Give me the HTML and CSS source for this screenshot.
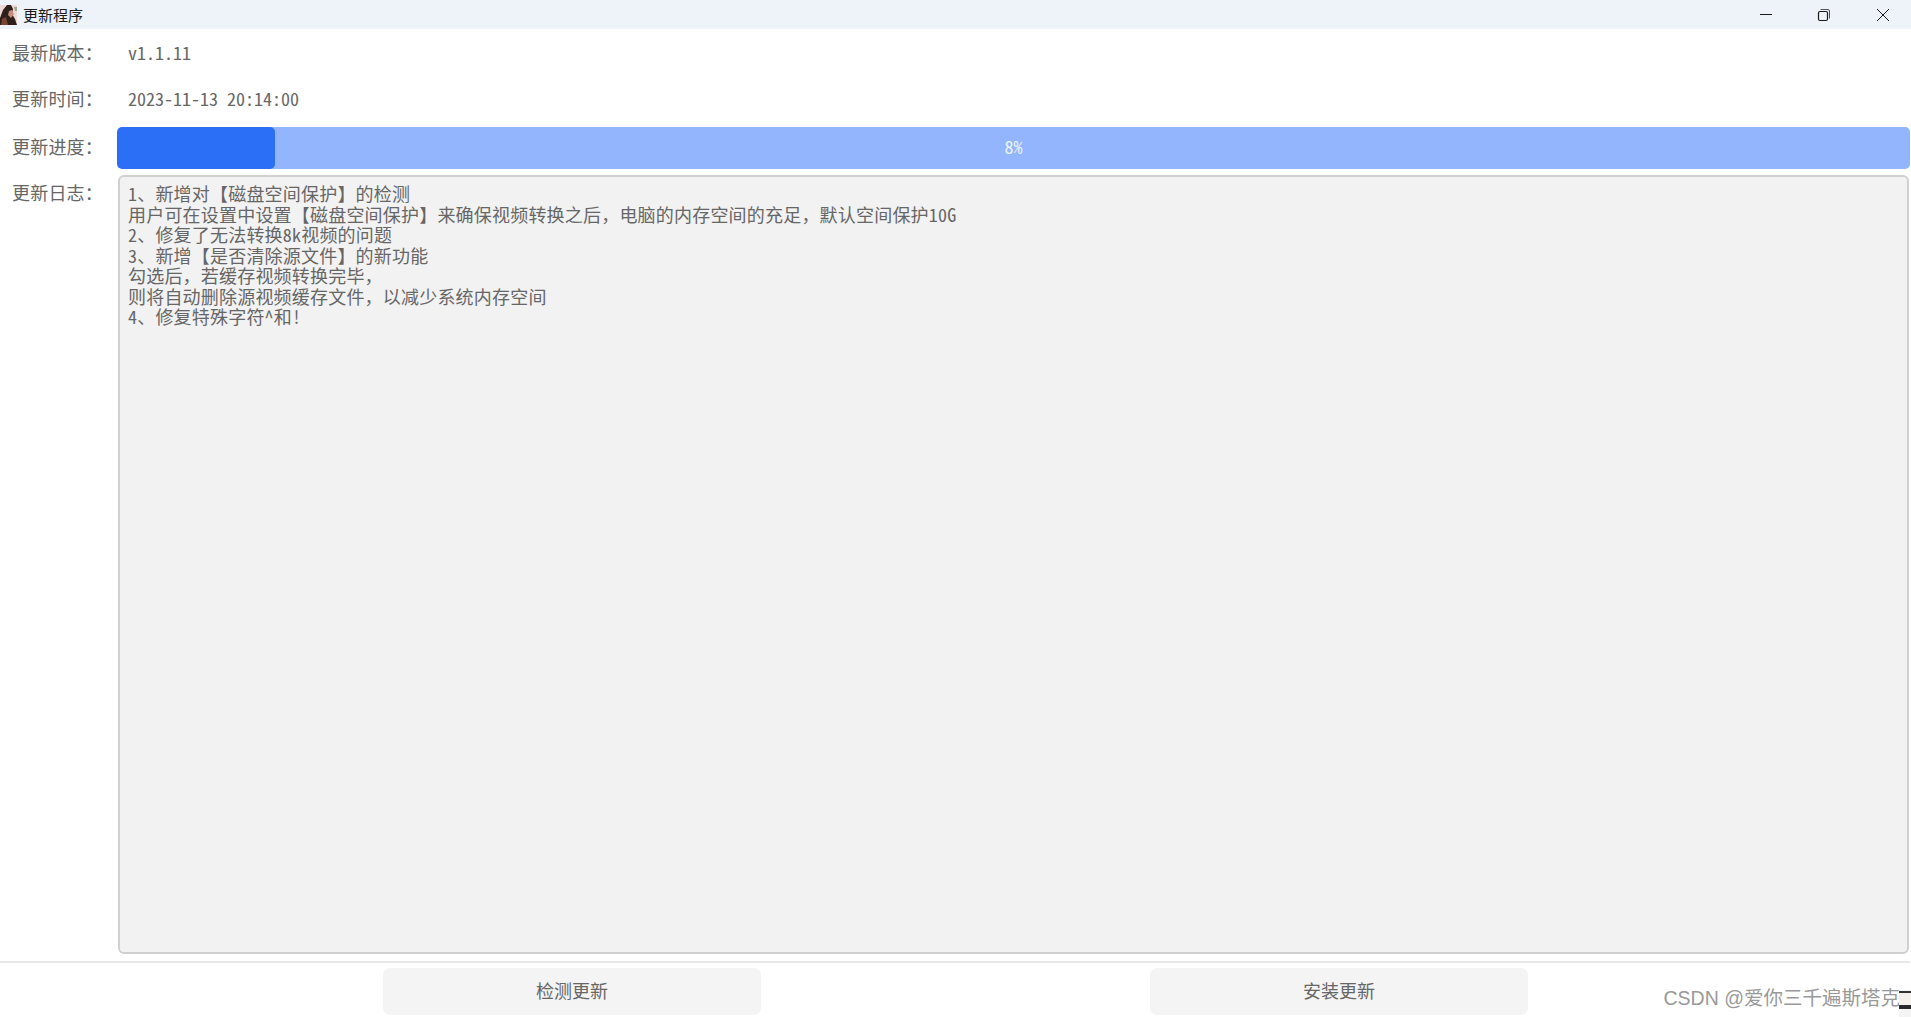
FILE: index.html
```html
<!DOCTYPE html>
<html lang="zh-CN">
<head>
    <meta charset="UTF-8">
    <title>更新程序</title>
    <link rel="stylesheet" href="styles.css">
</head>
<body>
    <div class="window">
        <div class="titlebar">
            <svg class="app-icon" width="17" height="20" viewBox="0 0 17 20">
                <rect width="17" height="20" fill="#efd9d6"/>
                <path d="M0 20V13L3 5L7 0H11L13 4L12 9L15 14L17 20Z" fill="#2e1f1b"/>
                <path d="M9 6L12 5L14 9L11 13L8 10Z" fill="#c39080"/>
                <path d="M2 14L6 12L8 20H1Z" fill="#7a4432"/>
                <path d="M14 2H17V6H15Z" fill="#9aa58e"/>
            </svg>
            <span class="app-title">更新程序</span>
            <div class="win-buttons">
                <svg class="win-min" width="18" height="14" viewBox="0 0 18 14"><path d="M4 6.500H16" stroke="#1a1a1a" fill="none"/></svg>
                <svg width="14" height="14" viewBox="0 0 14 14"><rect x="2.500" y="3.500" width="9" height="9" rx="1.500" stroke="#1a1a1a" stroke-width="1.200" fill="none"/><path d="M4.500 1.500H12a1.500 1.500 0 0 1 1.500 1.500V10.500" stroke="#555" fill="none"/></svg>
                <svg width="14" height="14" viewBox="0 0 14 14"><path d="M1 1L13 13M13 1L1 13" stroke="#1a1a1a" fill="none"/></svg>
            </div>
        </div>

        <div class="content">
            <div class="row">
                <div class="label">最新版本：</div>
                <div class="value">v1.1.11</div>
            </div>
            <div class="row">
                <div class="label">更新时间：</div>
                <div class="value">2023-11-13 20:14:00</div>
            </div>
            <div class="row progress-row">
                <div class="label">更新进度：</div>
                <div class="progress">
                    <div class="progress-fill"></div>
                    <span class="progress-text">8%</span>
                </div>
            </div>
            <div class="row log-row">
                <div class="label">更新日志：</div>
                <div class="log">1、新增对【磁盘空间保护】的检测
用户可在设置中设置【磁盘空间保护】来确保视频转换之后，电脑的内存空间的充足，默认空间保护10G
2、修复了无法转换8k视频的问题
3、新增【是否清除源文件】的新功能
勾选后，若缓存视频转换完毕，
则将自动删除源视频缓存文件，以减少系统内存空间
4、修复特殊字符^和!</div>
            </div>
        </div>

        <div class="footer">
            <button class="btn btn-check">检测更新</button>
            <button class="btn btn-install">安装更新</button>
        </div>

        <div class="watermark">CSDN @爱你三千遍斯塔克</div>
        <div class="corner-thumb"></div>
    </div>
</body>
</html>
```

FILE: styles.css
```css
* {
    margin: 0;
    padding: 0;
    box-sizing: border-box;
}

body {
    font-family: 'Noto Sans Mono CJK SC', 'Noto Sans CJK SC', monospace;
    background: white;
    overflow: hidden;
}

.window {
    position: relative;
    width: 1911px;
    height: 1017px;
    display: flex;
    flex-direction: column;
    overflow: hidden;
}

/* Title bar */
.titlebar {
    height: 29px;
    background-color: #eef3fa;
    display: flex;
    align-items: center;
    flex-shrink: 0;
}

.app-icon {
    margin-top: 1px;
}

.app-title {
    margin-left: 6px;
    font-family: 'Noto Sans CJK SC', sans-serif;
    font-size: 15px;
    color: #1a1a1a;
}

.win-buttons {
    margin-left: auto;
    margin-right: 21px;
    display: flex;
    gap: 46px;
}

.win-min {
    margin-right: -4px;
}

/* Rows */
.content {
    flex: 1;
    display: flex;
    flex-direction: column;
    padding: 5px 1px 0 12px;
    min-height: 0;
}

.row {
    display: flex;
    align-items: center;
    height: 36px;
    margin-bottom: 10px;
    font-size: 18px;
    color: #666;
}

.label {
    width: 105px;
    flex-shrink: 0;
    line-height: 36px;
    letter-spacing: 0.2px;
}

.value {
    margin-left: 11px;
}

.progress-row {
    height: 42px;
    margin-top: 1px;
    margin-bottom: 6px;
}

.progress-row .label {
    margin-top: -5px;
}

.progress {
    position: relative;
    flex: 1;
    height: 42px;
    padding-bottom: 4px;
    background-color: #93b5fd;
    border-radius: 5px;
    display: flex;
    align-items: center;
    justify-content: center;
    overflow: hidden;
}

.progress-fill {
    position: absolute;
    left: 0;
    top: 0;
    bottom: 0;
    width: 158px;
    background-color: #2a6ff6;
    border-radius: 5px;
}

.progress-text {
    position: relative;
    font-size: 18px;
    color: #edf2fd;
}

.log-row {
    flex: 1;
    align-items: stretch;
    min-height: 0;
    margin-bottom: 7px;
}

.log-row .label {
    margin-top: -1px;
}

.log {
    flex: 1;
    margin-left: 1px;
    margin-right: 1px;
    padding: 6px 8px;
    background-color: #f2f2f2;
    border: 2px solid #d0d0d0;
    border-radius: 6px;
    white-space: pre-wrap;
    font-size: 18px;
    line-height: 20.500px;
    letter-spacing: 0.2px;
}

/* Footer */
.footer {
    height: 56px;
    border-top: 2px solid #e8e8e8;
    margin-right: 1px;
    flex-shrink: 0;
    padding-top: 5px;
    display: flex;
    padding-left: 383px;
    gap: 389px;
}

.btn {
    width: 378px;
    height: 47px;
    padding-bottom: 4px;
    border: none;
    border-radius: 7px;
    background-color: #f4f4f4;
    color: #666;
    font-family: 'Noto Sans CJK SC', sans-serif;
    font-size: 18px;
    font-weight: 400;
}

/* Blog watermark burned into the screenshot */
.watermark {
    position: absolute;
    right: 11px;
    bottom: 6px;
    font-family: 'Liberation Sans', 'Noto Sans CJK SC', sans-serif;
    font-size: 19.500px;
    color: #999;
}

.corner-thumb {
    position: absolute;
    right: 0;
    bottom: 0;
    width: 12px;
    height: 27px;
    background: linear-gradient(#f6f6f6 0 1px, #333 1px 3px, #f4f1ec 3px 15px, #2a2a2a 15px 19px, #f4f4f4 19px);
}
```
